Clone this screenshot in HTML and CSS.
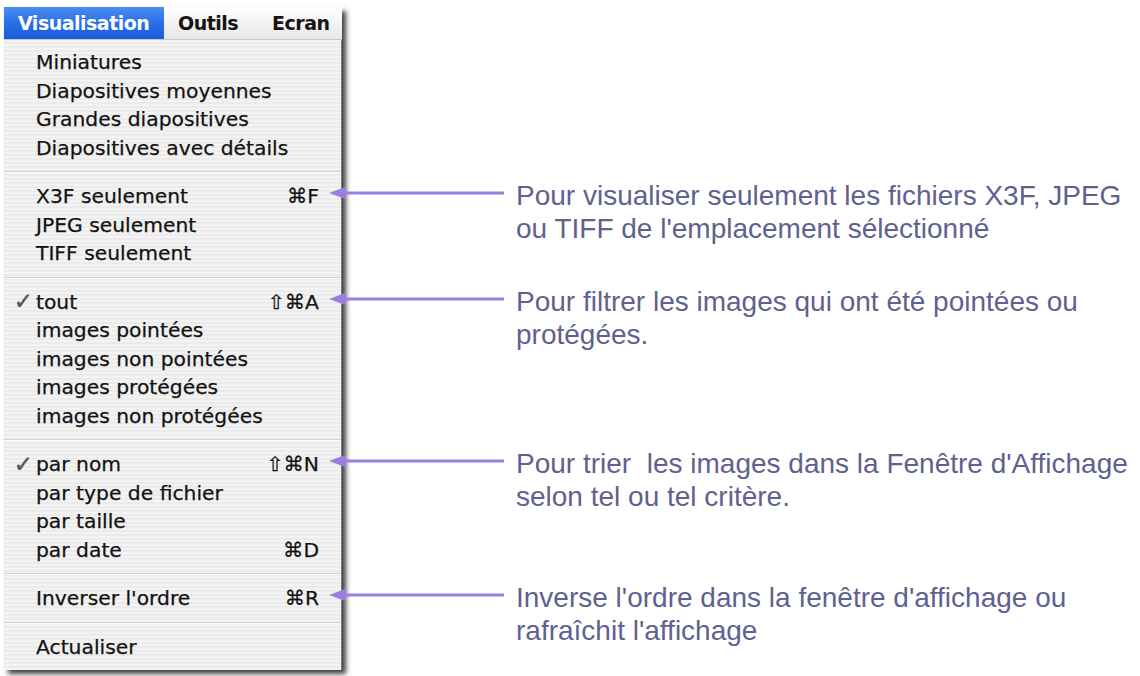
FILE: index.html
```html
<!DOCTYPE html>
<html lang="fr">
<head>
<meta charset="utf-8">
<title>Visualisation</title>
<link rel="stylesheet" href="styles.css">
</head>
<body>
<div class="screen">
  <div class="menu">
    <div class="bar">
      <span class="title active">Visualisation</span>
      <span class="title">Outils</span>
      <span class="title">Ecran</span>
    </div>
    <div class="panel">
      <div class="item"><span class="check"></span><span class="label">Miniatures</span><span class="key"></span></div>
      <div class="item"><span class="check"></span><span class="label">Diapositives moyennes</span><span class="key"></span></div>
      <div class="item"><span class="check"></span><span class="label">Grandes diapositives</span><span class="key"></span></div>
      <div class="item"><span class="check"></span><span class="label">Diapositives avec détails</span><span class="key"></span></div>
      <div class="sep"></div>
      <div class="item"><span class="check"></span><span class="label">X3F seulement</span><span class="key">⌘F</span>
        <div class="note">
          <svg class="arrow" width="175" height="14" viewBox="0 0 175 14"><polygon points="0,7 16,1 16,13" /><rect x="10" y="5.5" width="165" height="3" /></svg>
          <p class="note-text">Pour visualiser seulement les fichiers X3F, JPEG<br>ou TIFF de l'emplacement sélectionné</p>
        </div>
      </div>
      <div class="item"><span class="check"></span><span class="label">JPEG seulement</span><span class="key"></span></div>
      <div class="item"><span class="check"></span><span class="label">TIFF seulement</span><span class="key"></span></div>
      <div class="sep"></div>
      <div class="item"><span class="check">✓</span><span class="label">tout</span><span class="key">⇧⌘A</span>
        <div class="note">
          <svg class="arrow" width="175" height="14" viewBox="0 0 175 14"><polygon points="0,7 16,1 16,13" /><rect x="10" y="5.5" width="165" height="3" /></svg>
          <p class="note-text">Pour filtrer les images qui ont été pointées ou<br>protégées.</p>
        </div>
      </div>
      <div class="item"><span class="check"></span><span class="label">images pointées</span><span class="key"></span></div>
      <div class="item"><span class="check"></span><span class="label">images non pointées</span><span class="key"></span></div>
      <div class="item"><span class="check"></span><span class="label">images protégées</span><span class="key"></span></div>
      <div class="item"><span class="check"></span><span class="label">images non protégées</span><span class="key"></span></div>
      <div class="sep"></div>
      <div class="item"><span class="check">✓</span><span class="label">par nom</span><span class="key">⇧⌘N</span>
        <div class="note">
          <svg class="arrow" width="175" height="14" viewBox="0 0 175 14"><polygon points="0,7 16,1 16,13" /><rect x="10" y="5.5" width="165" height="3" /></svg>
          <p class="note-text">Pour trier&nbsp; les images dans la Fenêtre d'Affichage<br>selon tel ou tel critère.</p>
        </div>
      </div>
      <div class="item"><span class="check"></span><span class="label">par type de fichier</span><span class="key"></span></div>
      <div class="item"><span class="check"></span><span class="label">par taille</span><span class="key"></span></div>
      <div class="item"><span class="check"></span><span class="label">par date</span><span class="key">⌘D</span></div>
      <div class="sep"></div>
      <div class="item"><span class="check"></span><span class="label">Inverser l'ordre</span><span class="key">⌘R</span>
        <div class="note">
          <svg class="arrow" width="175" height="14" viewBox="0 0 175 14"><polygon points="0,7 16,1 16,13" /><rect x="10" y="5.5" width="165" height="3" /></svg>
          <p class="note-text">Inverse l'ordre dans la fenêtre d'affichage ou<br>rafraîchit l'affichage</p>
        </div>
      </div>
      <div class="sep"></div>
      <div class="item"><span class="check"></span><span class="label">Actualiser</span><span class="key"></span></div>
    </div>
  </div>
</div>
</body>
</html>
```
FILE: styles.css
```css
* { box-sizing: border-box; }

html, body {
  margin: 0;
  padding: 0;
  background: #ffffff;
}

.screen {
  padding: 7px 0 0 4px;
  width: 1140px;
  height: 676px;
  overflow: hidden;
}

.menu {
  width: 338px;
  box-shadow: 4px 4px 5px rgba(0, 0, 0, 0.75);
  font-family: "DejaVu Sans", "Liberation Sans", sans-serif;
}

.bar {
  height: 33px;
  display: flex;
  align-items: stretch;
  background: linear-gradient(#ffffff, #f3f3f3 50%, #e6e6e6);
  border-bottom: 1px solid #c9c9c9;
}

.title {
  display: flex;
  align-items: center;
  padding: 0 0 0 14px;
  font-weight: bold;
  font-size: 19px;
  letter-spacing: -0.5px;
  color: #151515;
}

.title.active {
  padding: 0 14px;
  width: 160px;
  color: #ffffff;
  background: linear-gradient(#4b8df3, #2a6fe6 50%, #175bd9);
}

.title + .title {
  padding-left: 14px;
}

.title:last-child {
  padding-left: 34px;
}

.panel {
  padding: 8px 0 9px;
  background: repeating-linear-gradient(#f3f3f3 0 2px, #ebebeb 2px 4px);
  border-right: 1px solid #7a7a7a;
}

.item {
  position: relative;
  height: 28.5px;
  display: grid;
  grid-template-columns: 32px 1fr auto;
  align-items: center;
  padding-right: 22px;
  font-size: 20.3px;
  color: #121212;
  -webkit-text-stroke: 0.25px #121212;
  white-space: nowrap;
}

.check {
  text-align: right;
  padding-right: 3px;
  font-size: 23px;
  line-height: 1;
  color: #555;
  -webkit-text-stroke: 0.4px #555;
}

.key {
  text-align: right;
}

.sep {
  height: 20px;
  background: linear-gradient(transparent 9px, #d2d2d2 9px 10px, #fbfbfb 10px 11px, transparent 11px);
}

.note {
  position: absolute;
  left: 325px;
  top: -5px;
  display: flex;
  align-items: flex-start;
  -webkit-text-stroke: 0;
}

.arrow {
  display: block;
  margin-top: 9px;
  fill: #9a7ee3;
  flex: none;
}

.note-text {
  margin: 2px 0 0 12px;
  font-family: "Liberation Sans", Arial, sans-serif;
  font-size: 28px;
  line-height: 33px;
  color: #5f6190;
  white-space: nowrap;
}
```
